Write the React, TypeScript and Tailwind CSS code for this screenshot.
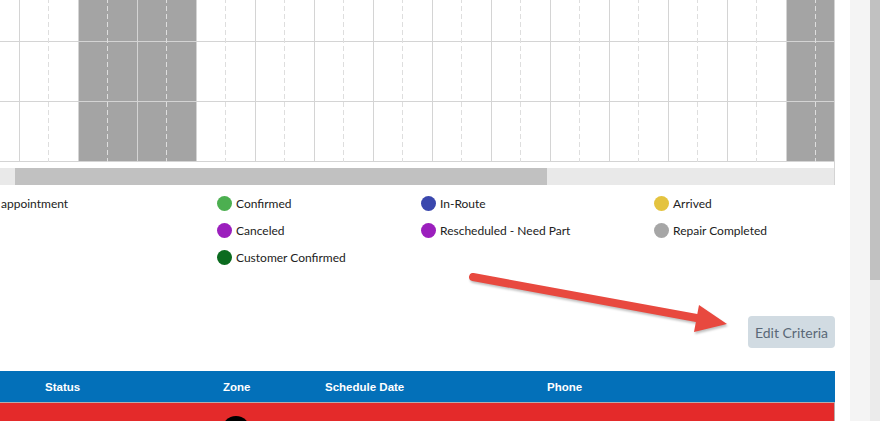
const COLS = Array.from({ length: 15 }, (_, i) => i);
const OFF = new Set([2, 3, 14]);

const LEGEND: { label: string; color?: string }[][] = [
  [{ label: 'appointment' }, { label: 'Confirmed', color: '#4caf50' }, { label: 'In-Route', color: '#3a47ad' }, { label: 'Arrived', color: '#e4c33f' }],
  [{ label: '' }, { label: 'Canceled', color: '#9b1fbd' }, { label: 'Rescheduled - Need Part', color: '#9b1fbd' }, { label: 'Repair Completed', color: '#a6a6a6' }],
  [{ label: '' }, { label: 'Customer Confirmed', color: '#0b6b1f' }, { label: '' }, { label: '' }],
];

function Timeline() {
  return (
    <div className="h-[162px] overflow-hidden">
      <div className="flex ml-[-39px] mt-[-18px]">
        {COLS.map((c) => (
          <div
            key={c}
            className={`relative w-[59px] shrink-0 border-r border-[#d4d4d4] ${OFF.has(c) ? 'bg-[#a4a4a4]' : 'bg-white'}`}
          >
            <div className="h-[60px] border-b border-[#d4d4d4]" />
            <div className="h-[60px] border-b border-[#d4d4d4]" />
            <div className="h-[60px] border-b border-[#d4d4d4]" />
            <div className="absolute left-[28px] top-0 bottom-0 w-px bg-[repeating-linear-gradient(to_bottom,#dedede_0px,#dedede_5px,transparent_5px,transparent_8px)]" />
          </div>
        ))}
      </div>
    </div>
  );
}

export default function App() {
  return (
    <div className="relative flex h-[421px] w-[880px] overflow-hidden bg-white font-['Lato',sans-serif]">
      <div className="flex w-[850px] shrink-0 flex-col">
        {/* schedule board */}
        <div className="w-[835px] border-r border-[#d4d4d4]">
          <Timeline />
          <div className="h-[6px]" />
          <div className="h-[17px] bg-[#e9e9e9] pl-[15px]">
            <div className="h-full w-[532px] bg-[#c1c1c1]" />
          </div>
        </div>

        {/* legend */}
        <div className="mt-[5px] w-[835px]">
          {LEGEND.map((row, r) => (
            <div key={r} className="grid h-[27px] grid-cols-[217px_204px_233px_1fr] text-[12px] text-[#222]">
              {row.map((it, i) => (
                <div key={i} className="flex items-center gap-[4px]">
                  {it.color && <span className="mt-[-1px] h-[15px] w-[15px] rounded-full" style={{ backgroundColor: it.color }} />}
                  {it.label && <span className={i === 0 ? 'pl-[1px]' : ''}>{it.label}</span>}
                </div>
              ))}
            </div>
          ))}
        </div>

        <div className="mt-[45px] flex w-[835px] justify-end">
          <button className="h-[32px] w-[87px] rounded-[4px] bg-[#d1dbe2] text-[14px] text-[#5a6877]">
            Edit Criteria
          </button>
        </div>

        {/* results table */}
        <div className="mt-[23px] w-[835px] font-['Liberation_Sans',Arial,sans-serif]">
          <div className="grid h-[31px] grid-cols-[223px_102px_222px_1fr] items-center bg-[#0370b9] pt-[2px] text-[11.5px] font-bold text-white">
            <div className="pl-[45px]">Status</div>
            <div>Zone</div>
            <div>Schedule Date</div>
            <div>Phone</div>
          </div>
          <div className="h-[40px] border-t border-r border-[#b9aaaa] bg-[#e42a2a] pl-[222px] pt-[13px]">
            <div className="h-[28px] w-[28px] rounded-full bg-black" />
          </div>
        </div>
      </div>

      <div className="w-[20px] shrink-0 bg-[#f4f4f4]" />
      <div className="flex w-[10px] shrink-0 flex-col bg-[#ebebeb]">
        <div className="h-[280px] bg-[#c1c1c1]" />
      </div>

      {/* annotation arrow */}
      <svg className="pointer-events-none absolute left-0 top-0 drop-shadow-[1px_2px_1px_rgba(0,0,0,0.25)]" width="880" height="421">
        <line x1="473" y1="277" x2="702" y2="319" stroke="#e8493f" strokeWidth="8" strokeLinecap="round" />
        <polygon points="699,305 727,324 694,332" fill="#e8493f" />
      </svg>
    </div>
  );
}
